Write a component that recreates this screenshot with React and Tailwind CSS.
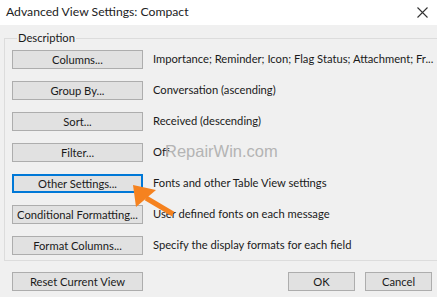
import React from 'react';

const rows = [
  { label: 'Columns...', desc: 'Importance; Reminder; Icon; Flag Status; Attachment; Fr...' },
  { label: 'Group By...', desc: 'Conversation (ascending)' },
  { label: 'Sort...', desc: 'Received (descending)' },
  { label: 'Filter...', desc: 'Off' },
  { label: 'Other Settings...', desc: 'Fonts and other Table View settings', focused: true },
  { label: 'Conditional Formatting...', desc: 'User defined fonts on each message' },
  { label: 'Format Columns...', desc: 'Specify the display formats for each field' },
];

const WinButton = ({ children, focused, className = '' }) => (
  <button
    className={`h-[19px] flex items-center justify-center whitespace-nowrap bg-[#e1e1e1] text-[#1a1a1a] leading-none ${
      focused ? 'border-2 border-[#0078d7]' : 'border border-[#adadad]'
    } ${className}`}
  >
    {children}
  </button>
);

export default function App() {
  return (
    <div
      className="relative w-[437px] h-[297px] bg-[#f0f0f0] overflow-hidden text-[11.2px] text-[#1a1a1a]"
      style={{ fontFamily: 'Lato, "Noto Sans", sans-serif' }}
    >
      {/* title bar */}
      <div className="h-[25px] bg-white flex items-center justify-between pl-[6px] pr-[8px]">
        <span className="text-[12.2px] text-[#222]">Advanced View Settings: Compact</span>
        <svg width="11" height="11" viewBox="0 0 11 11" className="mr-[1px]">
          <path d="M0.5 0.5 L10.5 10.5 M10.5 0.5 L0.5 10.5" stroke="#333" strokeWidth="1.1" />
        </svg>
      </div>

      <div className="px-[4px]">
        <fieldset className="mt-[5px] w-[429px] h-[231px] border border-[#dcdcdc] pl-[7px] pr-[4px]">
          <legend className="ml-[5px] px-[1px] leading-[16px]">Description</legend>
          <div className="flex flex-col gap-[12px] mt-[4px]">
            {rows.map((r) => (
              <div key={r.label} className="flex items-center gap-[10px]">
                <WinButton focused={r.focused} className="w-[131px] shrink-0">
                  {r.label}
                </WinButton>
                <span className="whitespace-nowrap">{r.desc}</span>
              </div>
            ))}
          </div>
        </fieldset>

        <div className="flex items-center mt-[11px] pl-[8px] pr-[1px]">
          <WinButton className="w-[131px]">Reset Current View</WinButton>
          <div className="ml-auto flex gap-[10px]">
            <WinButton className="w-[67px]">OK</WinButton>
            <WinButton className="w-[67px]">Cancel</WinButton>
          </div>
        </div>
      </div>

      {/* watermark */}
      <div
        className="absolute left-[165px] top-[139px] text-[16.5px] text-[#b4b4b4]"
        style={{ fontFamily: '"Liberation Sans", sans-serif' }}
      >
        RepairWin.com
      </div>

      {/* orange arrow */}
      <svg className="absolute left-0 top-0" width="437" height="297">
        <line x1="146" y1="198" x2="173" y2="214" stroke="#f5821f" strokeWidth="5" />
        <polygon points="133,185 156,190 136,207" fill="#f5821f" />
      </svg>
    </div>
  );
}
